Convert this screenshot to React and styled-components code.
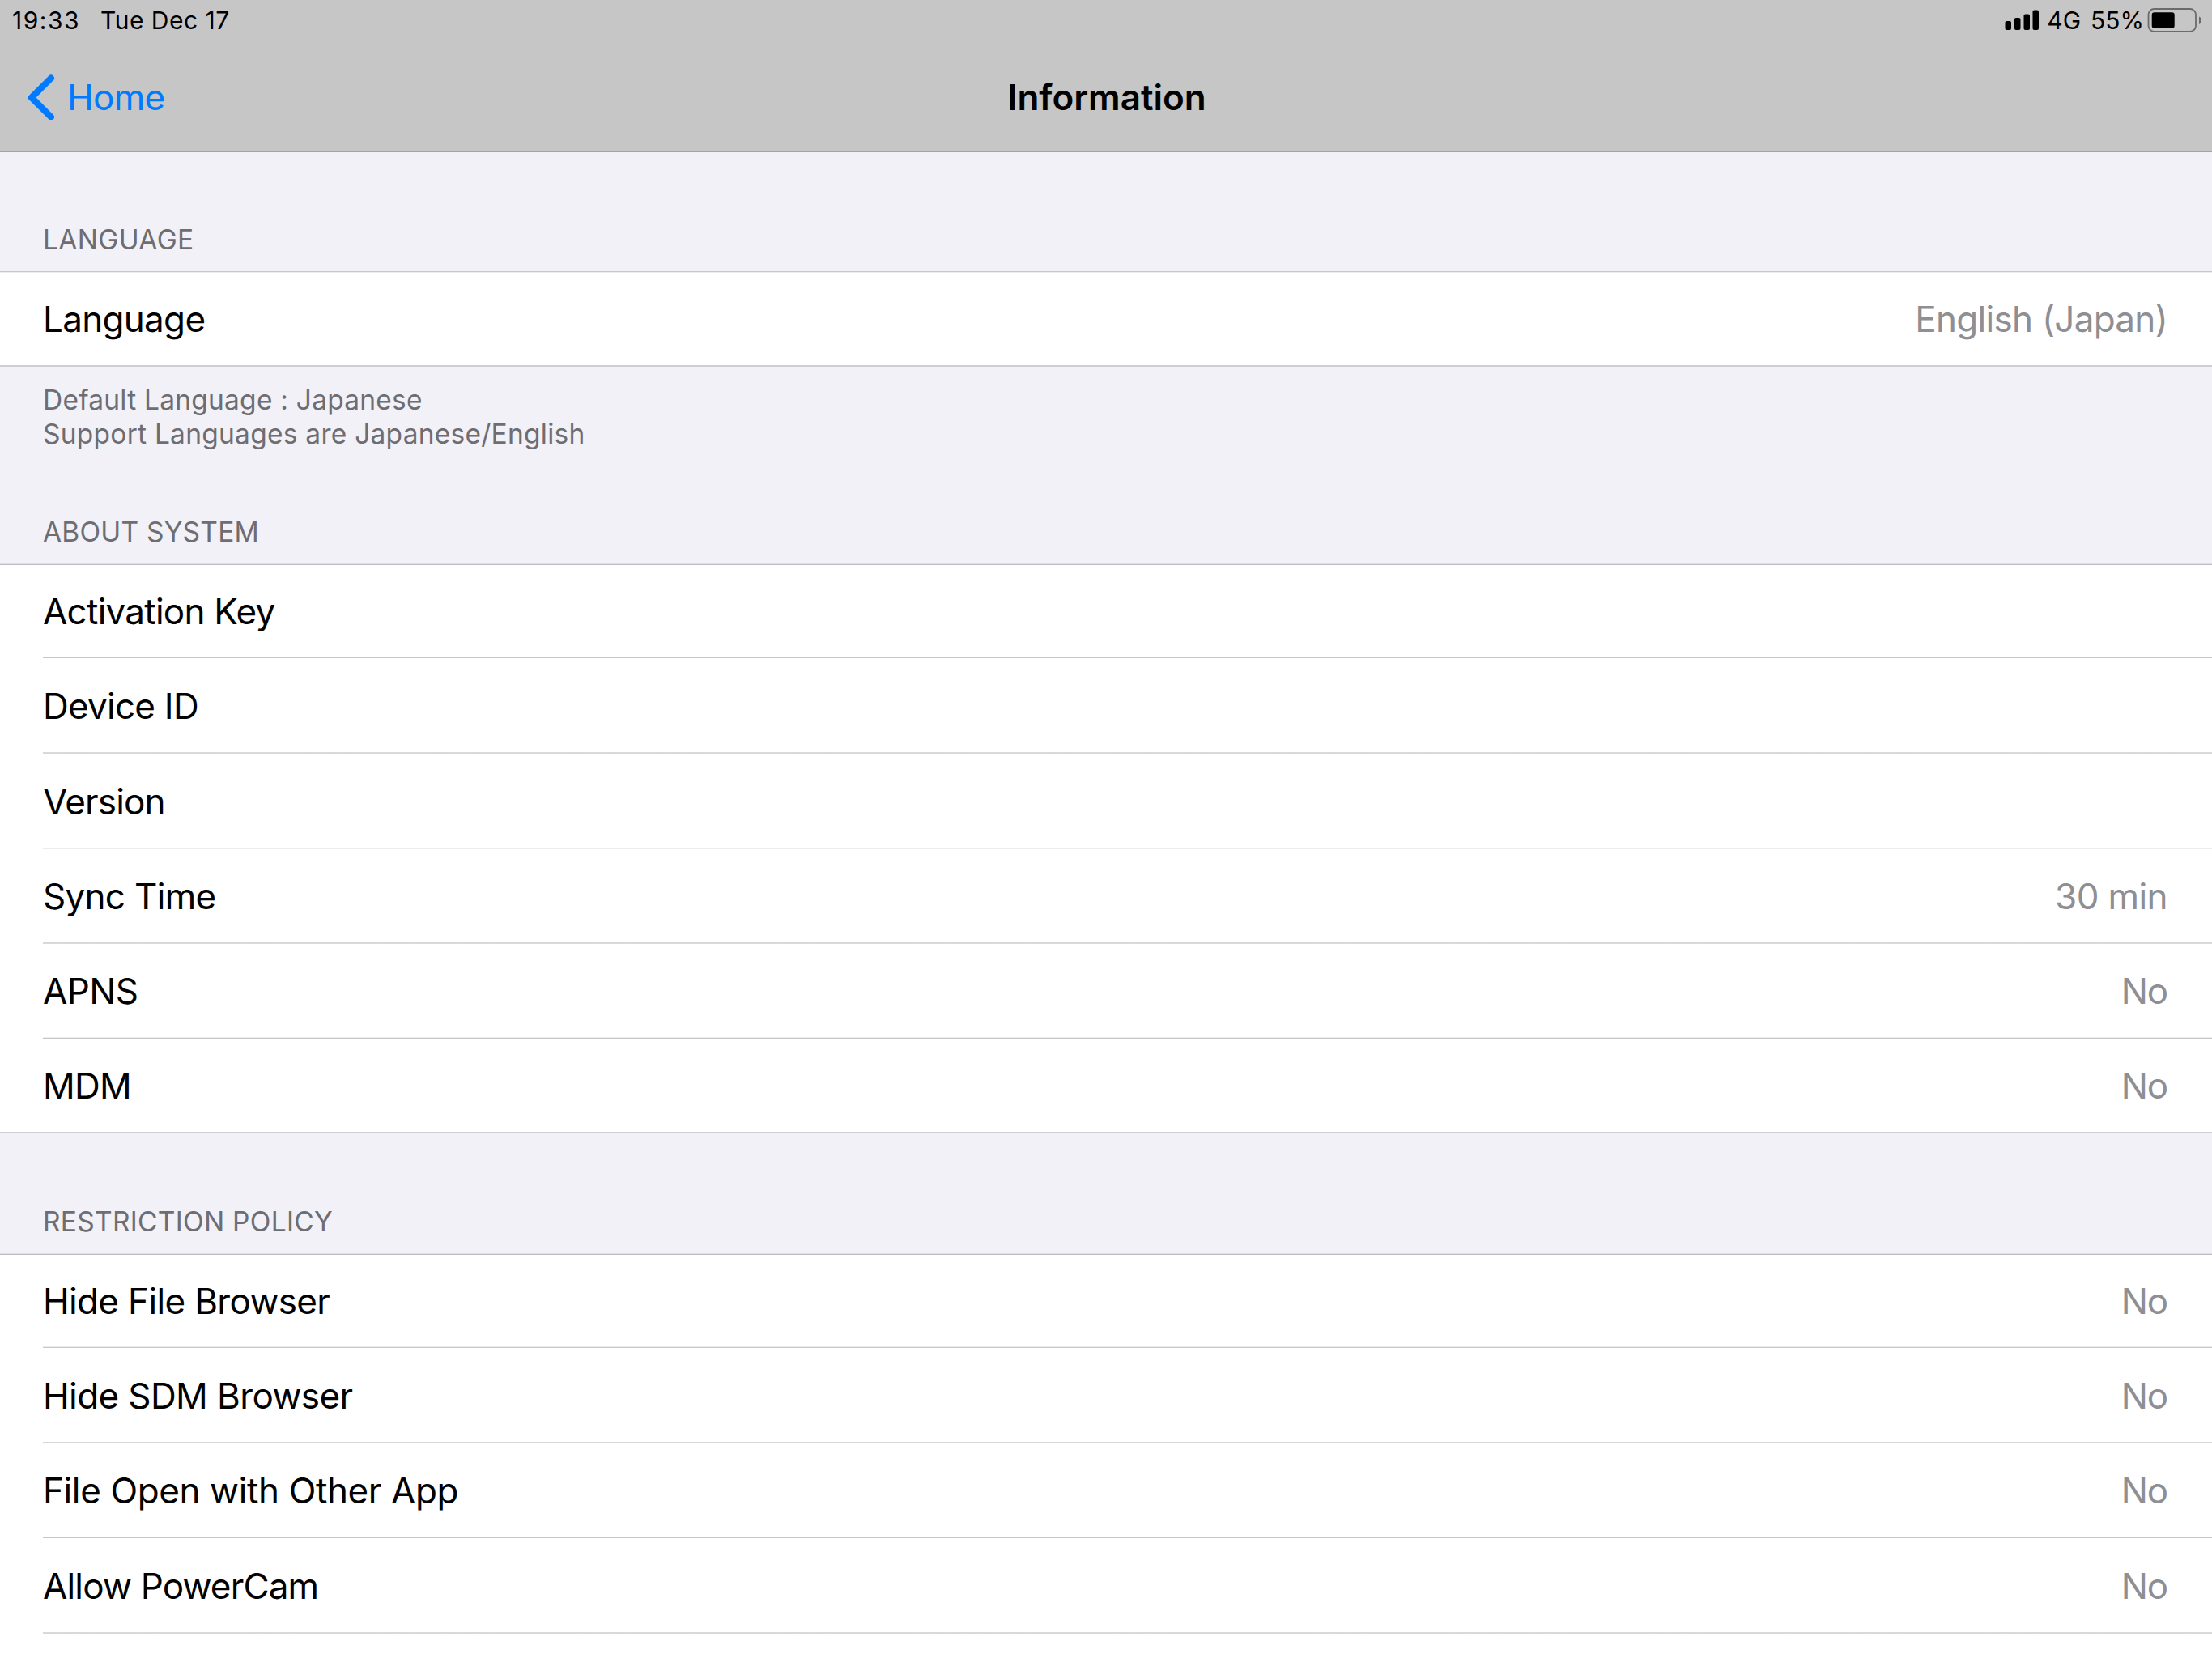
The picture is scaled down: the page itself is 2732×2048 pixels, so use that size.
import React from "react";
import styled, { createGlobalStyle, css } from "styled-components";

const GlobalStyle = createGlobalStyle`
  * {
    box-sizing: border-box;
  }

  body {
    margin: 0;
    background: #f2f1f7;
    font-family: Inter, "Liberation Sans", sans-serif;
    overflow: hidden;
  }
`;

const Screen = styled.div`
  display: flex;
  flex-direction: column;
  width: 2732px;
  height: 2048px;
  overflow: hidden;
  background: #f2f1f7;
`;

const textStyle = css`
  white-space: pre;
  letter-spacing: ${({ $tracking = 0 }) => $tracking}px;
`;

// Header
const Header = styled.header`
  flex: none;
  height: 188px;
  background: #c6c6c6;
  border-bottom: 1px solid #a4a4a7;
`;

const StatusBar = styled.div`
  display: flex;
  align-items: center;
  height: 48px;
  padding: 2px 12px 0 15px;
  color: #000;
  font-size: 30px;
  line-height: 46px;
`;

const StatusText = styled.span`
  ${textStyle}
  margin-left: ${({ $gap = 0 }) => $gap}px;
`;

const Spacer = styled.div`
  flex: 1;
`;

const SignalIcon = styled.svg`
  width: 42px;
  height: 26px;
`;

const BatteryIcon = styled.svg`
  width: 68px;
  height: 32px;
  margin-left: 4px;
`;

const NavBar = styled.nav`
  display: grid;
  grid-template-columns: 1fr auto 1fr;
  align-items: center;
  height: 144px;
  padding: 0 34px 0 36px;
  line-height: 144px;
  font-size: 44px;
`;

const BackButton = styled.a`
  display: flex;
  align-items: center;
  margin-left: -2px;
  color: #007aff;
  letter-spacing: -0.7px;
`;

const BackIcon = styled.svg`
  width: 34px;
  height: 56px;
  margin-right: 15px;
`;

const Title = styled.h1`
  margin: 0;
  color: #000;
  font-size: 44px;
  font-weight: 600;
  line-height: inherit;
`;

// Table
const SectionTitle = styled.h2`
  ${textStyle}
  display: flex;
  align-items: flex-end;
  flex: none;
  height: ${({ $height }) => $height}px;
  margin: 0;
  padding: 0 53px 18px;
  color: #6d6d72;
  font-size: 33.5px;
  font-weight: 400;
  line-height: 42px;
`;

const SectionNote = styled.div`
  flex: none;
  height: 109px;
  padding: 20px 53px 0;
  color: #6d6d72;
  font-size: 33.5px;
  line-height: 42px;
`;

const NoteLine = styled.div`
  ${textStyle}
`;

const Row = styled.div`
  display: flex;
  align-items: center;
  justify-content: space-between;
  flex: none;
  height: ${({ $height }) => $height}px;
  padding: 1px 55px ${({ $lift = 0 }) => $lift}px 53px;
  background: #fff;
  font-size: 44px;
`;

const RowLabel = styled.span`
  ${textStyle}
  color: #000;
`;

const RowValue = styled.span`
  ${textStyle}
  color: #8e8e93;
`;

// Hairline is 1.33px thick, so it is spread over two pixel rows
const Hairline = styled.div`
  flex: none;
  height: 2px;
  background-color: ${({ $base = "#fff" }) => $base};
  background-image: linear-gradient(
    rgba(60, 60, 67, ${({ $top }) => $top * 0.29}) 50%,
    rgba(60, 60, 67, ${({ $bottom }) => $bottom * 0.29}) 50%
  );
  background-repeat: no-repeat;
  background-position: ${({ $inset = 0 }) => $inset}px 0;
`;

const LINE = {
  down: { $top: 1, $bottom: 0.33 },
  even: { $top: 0.67, $bottom: 0.67 },
  up: { $top: 0.33, $bottom: 1 },
};

const systemRows = [
  { label: "Activation Key", tracking: -0.75, height: 113, line: "up" },
  { label: "Device ID", tracking: -0.75, height: 116, line: "even" },
  { label: "Version", tracking: -0.85, height: 116, line: "down" },
  { label: "Sync Time", tracking: -0.7, value: "30 min", valueTracking: -0.6, height: 115, line: "even" },
  { label: "APNS", tracking: -0.6, value: "No", valueTracking: -1.2, height: 115, line: "up" },
  { label: "MDM", tracking: -0.75, value: "No", valueTracking: -1.2, height: 115 },
];

const policyRows = [
  { label: "Hide File Browser", tracking: -0.65, value: "No", valueTracking: -1.2, height: 113, line: "up" },
  { label: "Hide SDM Browser", tracking: -0.6, value: "No", valueTracking: -1.2, height: 116, line: "even" },
  { label: "File Open with Other App", tracking: -0.38, value: "No", valueTracking: -1.2, height: 115, line: "up" },
  { label: "Allow PowerCam", tracking: -0.83, value: "No", valueTracking: -1.2, height: 116, line: "even" },
];

function TableRow({ label, tracking, value, valueTracking, height, line }) {
  return (
    <>
      <Row $height={height}>
        <RowLabel $tracking={tracking}>{label}</RowLabel>
        {value && <RowValue $tracking={valueTracking}>{value}</RowValue>}
      </Row>
      {line && <Hairline $inset={53} {...LINE[line]} />}
    </>
  );
}

function Signal() {
  return (
    <SignalIcon viewBox="0 0 42 26">
      <rect x="0.5" y="14" width="7.5" height="11" rx="2" />
      <rect x="12" y="10" width="7.5" height="15" rx="2" />
      <rect x="23.5" y="5.5" width="7.5" height="19.5" rx="2" />
      <rect x="34.5" y="0.5" width="7.5" height="24.5" rx="2" />
    </SignalIcon>
  );
}

function Battery() {
  return (
    <BatteryIcon viewBox="0 0 68 32">
      <rect x="1.5" y="2" width="58.5" height="28" rx="7" fill="none" stroke="#6b6b6b" strokeWidth="1.8" />
      <rect x="5.7" y="6.2" width="28" height="19.6" rx="3" />
      <path d="M64 11.5c3.8 1 3.8 8.5 0 9.5z" fill="#6b6b6b" />
    </BatteryIcon>
  );
}

function App() {
  return (
    <Screen>
      <GlobalStyle />
      <Header>
        <StatusBar>
          <StatusText $tracking={1.5}>19:33</StatusText>
          <StatusText $gap={25} $tracking={0.5}>
            Tue Dec 17
          </StatusText>
          <Spacer />
          <Signal />
          <StatusText $gap={10}>4G</StatusText>
          <StatusText $gap={12}>55%</StatusText>
          <Battery />
        </StatusBar>
        <NavBar>
          <BackButton>
            <BackIcon viewBox="0 0 34 56">
              <path
                d="M29 4.5 5 28.5l24 24"
                fill="none"
                stroke="currentColor"
                strokeWidth="8"
                strokeLinecap="round"
              />
            </BackIcon>
            Home
          </BackButton>
          <Title>Information</Title>
        </NavBar>
      </Header>

      <SectionTitle $height={147} $tracking={0.35}>
        LANGUAGE
      </SectionTitle>
      <Hairline {...LINE.down} />
      <Row $height={114} $lift={2}>
        <RowLabel $tracking={-0.7}>Language</RowLabel>
        <RowValue $tracking={-0.7}>English (Japan)</RowValue>
      </Row>
      <Hairline $base="#f2f1f7" {...LINE.even} />
      <SectionNote>
        <NoteLine $tracking={0.23}>Default Language : Japanese</NoteLine>
        <NoteLine $tracking={0.25}>Support Languages are Japanese/English</NoteLine>
      </SectionNote>

      <SectionTitle $height={134} $tracking={0.22}>
        ABOUT SYSTEM
      </SectionTitle>
      <Hairline $base="#f2f1f7" {...LINE.up} />
      {systemRows.map((row) => (
        <TableRow key={row.label} {...row} />
      ))}
      <Hairline $base="#f2f1f7" {...LINE.even} />

      <SectionTitle $height={148} $tracking={0.28}>
        RESTRICTION POLICY
      </SectionTitle>
      <Hairline $base="#f2f1f7" {...LINE.up} />
      {policyRows.map((row) => (
        <TableRow key={row.label} {...row} />
      ))}
      <Row $height={60} />
    </Screen>
  );
}

export default App;
